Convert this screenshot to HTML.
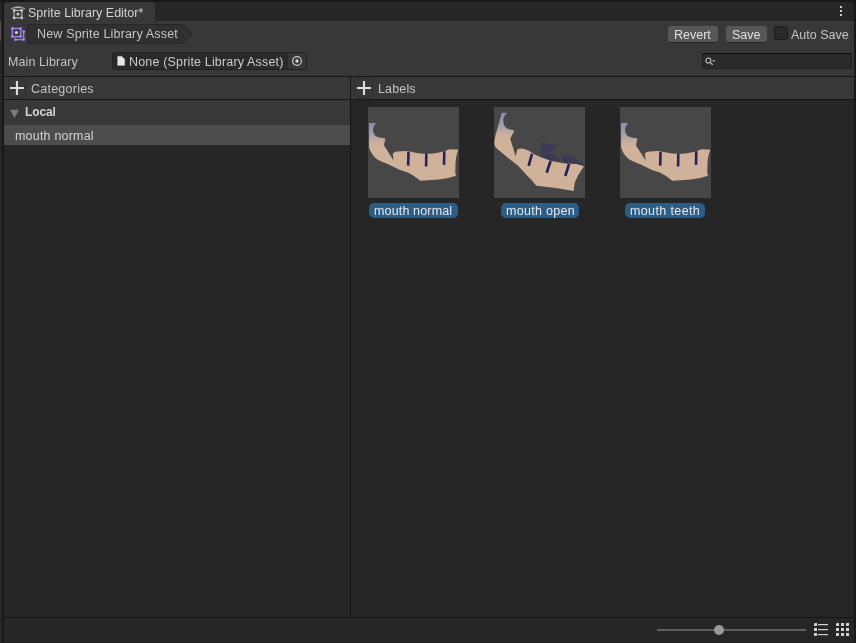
<!DOCTYPE html>
<html><head><meta charset="utf-8">
<style>
*{margin:0;padding:0;box-sizing:border-box}
html,body{width:856px;height:643px;overflow:hidden;background:#191919;font-family:"Liberation Sans",sans-serif;font-size:12.5px;color:#c4c4c4}
.a{position:absolute}
.t{position:absolute;white-space:nowrap;line-height:1;will-change:transform}
</style></head><body>
<!-- left strip -->
<div class="a" style="left:0;top:2px;width:2px;height:641px;background:#262626"></div>
<div class="a" style="left:0;top:21px;width:1px;height:20px;background:#505050"></div>
<!-- window -->
<div class="a" style="left:4px;top:21px;width:850px;height:622px;background:#383838"></div>
<!-- tab bar -->
<div class="a" style="left:4px;top:2px;width:850px;height:19px;background:#262626;border-radius:4px 4px 0 0"></div>
<div class="a" style="left:4px;top:2px;width:151px;height:19px;background:#383838;border-radius:3px 3px 0 0"></div>
<svg class="a" style="left:8px;top:2px" width="20" height="20" viewBox="0 0 20 20">
<path d="M3.1,6.8 Q10,3 16.9,6.8" fill="none" stroke="#c8c8c8" stroke-width="1"/>
<path d="M6.3,6.4 Q10,4.2 13.7,6.4 Q10,5.6 6.3,6.4Z" fill="#c8c8c8"/>
<rect x="6.1" y="8.4" width="7.7" height="7.5" fill="none" stroke="#c8c8c8" stroke-width="1.05"/>
<g fill="#c8c8c8"><circle cx="6.1" cy="8.4" r="1.35"/><circle cx="13.8" cy="8.4" r="1.35"/><circle cx="6.1" cy="15.9" r="1.35"/><circle cx="13.8" cy="15.9" r="1.35"/><circle cx="10" cy="12" r="1.6"/></g>
</svg>
<div class="t" style="left:28px;top:7px;color:#d2d2d2">Sprite Library Editor*</div>
<!-- kebab -->
<div class="a" style="left:840px;top:6px;width:2px;height:2px;background:#cccccc"></div>
<div class="a" style="left:840px;top:10px;width:2px;height:2px;background:#cccccc"></div>
<div class="a" style="left:840px;top:14px;width:2px;height:2px;background:#cccccc"></div>

<!-- breadcrumb -->
<svg class="a" style="left:8px;top:24px" width="20" height="20" viewBox="0 0 20 20">
<g fill="none" stroke="#a27ff0" stroke-width="1.4"><rect x="4.4" y="4.5" width="8.2" height="8.1"/><path d="M15.6,7.5 V15.6 H7.5"/></g>
<g fill="#a27ff0"><circle cx="4.4" cy="4.5" r="1.5"/><circle cx="12.6" cy="4.5" r="1.5"/><circle cx="4.4" cy="12.6" r="1.5"/><circle cx="12.6" cy="12.6" r="1.5"/><circle cx="15.6" cy="7.5" r="1.5"/><circle cx="15.6" cy="15.6" r="1.5"/><circle cx="7.5" cy="15.6" r="1.5"/></g>
<circle cx="8.4" cy="8.4" r="1.5" fill="#d8d8d8"/>
</svg>
<svg class="a" style="left:27px;top:24px" width="168" height="20" viewBox="0 0 168 20"><path d="M0.5 0.5H156L165.2 10L156 19.5H0.5Z" fill="#303030" stroke="#282828" stroke-width="1"/></svg>
<div class="t" style="left:37px;top:28px;color:#c4c4c4;letter-spacing:0.17px">New Sprite Library Asset</div>

<!-- buttons -->
<div class="a" style="left:668px;top:26px;width:50px;height:16.5px;background:#575757;border-radius:3px;border-bottom:1px solid #242424"></div>
<div class="t" style="left:674px;top:29px;color:#e0e0e0">Revert</div>
<div class="a" style="left:726px;top:26px;width:41px;height:16.5px;background:#575757;border-radius:3px;border-bottom:1px solid #242424"></div>
<div class="t" style="left:732px;top:29px;color:#e0e0e0">Save</div>
<div class="a" style="left:774px;top:26px;width:14px;height:14px;background:#2a2a2a;border:1px solid #1e1e1e;border-radius:2px"></div>
<div class="t" style="left:791px;top:29px;color:#c4c4c4">Auto Save</div>

<!-- main library -->
<div class="t" style="left:7.5px;top:56px;letter-spacing:0.1px">Main Library</div>
<div class="a" style="left:112px;top:52px;width:195px;height:18px;background:#2a2a2a;border-radius:3px;border:1px solid #212121"></div>
<svg class="a" style="left:115px;top:54px" width="12" height="14" viewBox="0 0 12 14"><path d="M2,1.8 H6.9 L10.2,5 V12 H2 Z" fill="#e6e6e6" stroke="#1c1c1c" stroke-width="0.8"/></svg>
<div class="a" style="left:288px;top:53px;width:18px;height:16px;background:#373737"></div>
<svg class="a" style="left:288px;top:53px" width="18" height="16" viewBox="0 0 18 16"><circle cx="9" cy="8" r="4.4" fill="none" stroke="#c8c8c8" stroke-width="1.2"/><circle cx="9" cy="8" r="1.7" fill="#d8d8d8"/></svg>
<div class="t" style="left:129px;top:56px;color:#cacaca;letter-spacing:0.165px">None (Sprite Library Asset)</div>
<div class="a" style="left:702px;top:53px;width:150px;height:16px;background:#2a2a2a;border-radius:3px;border:1px solid #212121;border-top-color:#0f0f0f"></div>
<svg class="a" style="left:703px;top:55px" width="16" height="12" viewBox="0 0 16 12"><circle cx="5.4" cy="5.5" r="2.5" fill="none" stroke="#c4c4c4" stroke-width="1.05"/><path d="M7.2,7.4 L9.6,9.8" stroke="#c4c4c4" stroke-width="1.2"/><path d="M9.2,5.2 H12.3 L10.75,6.9 Z" fill="#c4c4c4"/></svg>

<!-- separators -->
<div class="a" style="left:4px;top:76px;width:850px;height:1px;background:#151515"></div>
<div class="a" style="left:4px;top:99px;width:850px;height:1px;background:#151515"></div>
<div class="a" style="left:350px;top:76px;width:1px;height:542px;background:#151515"></div>
<!-- list areas -->
<div class="a" style="left:4px;top:100px;width:346px;height:517px;background:#262626"></div>
<div class="a" style="left:351px;top:100px;width:503px;height:517px;background:#262626"></div>
<div class="a" style="left:4px;top:617px;width:850px;height:1px;background:#151515"></div>
<div class="a" style="left:4px;top:618px;width:850px;height:25px;background:#262626"></div>
<div class="a" style="left:4px;top:642px;width:850px;height:1px;background:#1e1e1e"></div>
<div class="a" style="left:657px;top:629px;width:149px;height:2px;background:#5e5e5e"></div>
<div class="a" style="left:713.5px;top:624.6px;width:10.8px;height:10.8px;border-radius:50%;background:#999999"></div>
<svg class="a" style="left:812px;top:621px" width="40" height="17" viewBox="0 0 40 17"><g fill="#d2d2d2">
<path d="M3,2 H5 V5 H2 V3 Z"/><rect x="2" y="7" width="3" height="3"/><rect x="2" y="12" width="3" height="3"/>
<rect x="6" y="3" width="10" height="1.2"/><rect x="6" y="8" width="10" height="1.2"/><rect x="6" y="13" width="10" height="1.2"/>
<path d="M25,2 H27 V5 H24 V3 Z"/><rect x="29" y="2" width="3" height="3"/><rect x="34" y="2" width="3" height="3"/>
<rect x="24" y="7" width="3" height="3"/><rect x="29" y="7" width="3" height="3"/><rect x="34" y="7" width="3" height="3"/>
<rect x="24" y="12" width="3" height="3"/><rect x="29" y="12" width="3" height="3"/><rect x="34" y="12" width="3" height="3"/>
</g></svg>

<!-- headers -->
<div class="a" style="left:8px;top:78px;width:18px;height:20px;border:1px solid #2e2e2e;border-radius:3px;background:#383838"></div>
<svg class="a" style="left:8px;top:78px" width="18" height="19" viewBox="0 0 18 19"><path d="M2,10 H16 M9,3 V17" stroke="#dcdcdc" stroke-width="2.1"/></svg>
<div class="a" style="left:354px;top:78px;width:19px;height:20px;border:1px solid #2e2e2e;border-radius:3px;background:#383838"></div>
<svg class="a" style="left:355px;top:78px" width="18" height="19" viewBox="0 0 18 19"><path d="M2,10 H16 M9,3 V17" stroke="#dcdcdc" stroke-width="2.1"/></svg>
<div class="t" style="left:30.5px;top:83px;letter-spacing:0.24px">Categories</div>
<div class="t" style="left:378px;top:83px;letter-spacing:0.15px">Labels</div>

<div class="a" style="left:4px;top:100px;width:346px;height:25px;background:#383838"></div>
<svg class="a" style="left:9px;top:109px" width="11" height="10" viewBox="0 0 11 10"><path d="M1,0.8 H10 L5.5,8.9 Z" fill="#7a7a7a"/></svg>
<div class="t" style="left:25px;top:106px;font-weight:bold;font-size:12px;color:#d2d2d2;letter-spacing:-0.1px">Local</div>
<div class="a" style="left:4px;top:125px;width:346px;height:20px;background:#4d4d4d"></div>
<div class="t" style="left:14.5px;top:130px;color:#d2d2d2;letter-spacing:0.2px">mouth normal</div>

<!-- thumbs -->
<svg width="0" height="0" style="position:absolute"><defs>
<linearGradient id="jg1" x1="0" y1="16" x2="0" y2="40" gradientUnits="userSpaceOnUse"><stop offset="0" stop-color="#8c8cac"/><stop offset="0.35" stop-color="#9c98ae"/><stop offset="0.85" stop-color="#ceb09a"/><stop offset="1" stop-color="#d0b29b"/></linearGradient>
<linearGradient id="jg2" x1="0" y1="6" x2="0" y2="30" gradientUnits="userSpaceOnUse"><stop offset="0" stop-color="#8c8cac"/><stop offset="0.45" stop-color="#9c98ae"/><stop offset="0.92" stop-color="#ceb09a"/><stop offset="1" stop-color="#d0b29b"/></linearGradient>
</defs></svg>
<svg class="a" style="left:368px;top:107px" width="91" height="91" viewBox="0 0 91 91"><rect width="91" height="91" fill="#474747"/>
<path d="M1,16 L8.1,16 Q4.2,21 5.2,24.5 Q6.5,29.5 10.5,30.2 L17.5,31.4 L15.9,38.2 L25.6,53.4 L24.8,46.4 Q27,44.5 29.1,44.5 L38,44.1 Q43,44.8 47.5,45.8 Q52,46.6 57.6,46.8 Q63,46.8 67,46.2 Q72,45.3 77.1,43.9 Q80,42.5 82.5,42.3 L90.3,42.7 Q88,48 87.6,54.8 L87.2,65.6 L88,68.7 Q80,71.5 70.9,72.6 L52.2,73.8 Q45,68 39.8,65.6 Q36,64 32,62.9 L21.3,57.7 Q12,54 8.9,52.2 Q3.4,48 1.1,40.6 Z" fill="url(#jg1)"/>
<g stroke="#25235b" stroke-width="2.6"><path d="M40.5,44.7 L40.2,58.6"/><path d="M58.3,46.6 L58.1,59.4"/><path d="M76.3,44.2 L76,57.9"/></g></svg>
<svg class="a" style="left:494px;top:107px" width="91" height="91" viewBox="0 0 91 91"><rect width="91" height="91" fill="#474747"/>
<path d="M47.1,35.4 L62.9,38.2 L57.3,45.2 L64.8,52.7 L57.3,54.1 L47.1,50.3 Z" fill="#3c3b55"/>
<path d="M67.1,52.2 L69,48.5 Q71.5,47.8 74.1,48 Q77,48.8 79.7,50.3 L84.4,54.1 L89,56.9 L90,59.2 L82.5,56.9 L71.3,56.4 Z" fill="#3c3b55"/>
<path d="M7.8,5.7 L12.9,6.1 Q9.5,9.5 9.2,12.2 Q9.3,16 10.1,18.3 Q11.5,21 14.3,22 L20.4,23.4 L16.2,31.8 L21.8,49.5 L23.2,42.5 Q25,41.5 27.9,41.6 Q31.5,42.3 35.3,43.9 L39.6,47.1 L46.1,49.9 L57.3,54.1 Q64,55.6 71.3,56.4 L82.5,56.9 L90,59.2 Q87,63.5 84.4,68 Q82,72 80.6,76.4 L79.7,83.9 Q71,82.5 62,81.1 L42.4,78.8 Q39.5,75.5 37.5,72.7 Q35,70.5 34,69.4 L24.1,58.8 Q15,52 9.2,46.7 Q3,42 1.7,40.2 Q0,37.5 0.33,35.5 Q0.8,32 1.3,29 Q3,23 4.5,17.8 Z" fill="url(#jg2)"/>
<g stroke="#25235b" stroke-width="2.7"><path d="M38,46.9 L34.6,58.8"/><path d="M56.6,54 L52.7,65.7"/><path d="M75.1,56.8 L71.3,69"/></g></svg>
<svg class="a" style="left:620px;top:107px" width="91" height="91" viewBox="0 0 91 91"><rect width="91" height="91" fill="#474747"/>
<path d="M1,16 L8.1,16 Q4.2,21 5.2,24.5 Q6.5,29.5 10.5,30.2 L17.5,31.4 L15.9,38.2 L25.6,53.4 L24.8,46.4 Q27,44.5 29.1,44.5 L38,44.1 Q43,44.8 47.5,45.8 Q52,46.6 57.6,46.8 Q63,46.8 67,46.2 Q72,45.3 77.1,43.9 Q80,42.5 82.5,42.3 L90.3,42.7 Q88,48 87.6,54.8 L87.2,65.6 L88,68.7 Q80,71.5 70.9,72.6 L52.2,73.8 Q45,68 39.8,65.6 Q36,64 32,62.9 L21.3,57.7 Q12,54 8.9,52.2 Q3.4,48 1.1,40.6 Z" fill="url(#jg1)"/>
<g stroke="#25235b" stroke-width="2.6"><path d="M40.5,44.7 L40.2,58.6"/><path d="M58.3,46.6 L58.1,59.4"/><path d="M76.3,44.2 L76,57.9"/></g></svg>
<div class="a" style="left:369px;top:203px;width:89px;height:15px;background:#2c5d87;border-radius:5px"></div>
<div class="t" style="left:374px;top:204.5px;color:#e8e8e8;letter-spacing:0.15px">mouth normal</div>
<div class="a" style="left:501px;top:203px;width:78px;height:15px;background:#2c5d87;border-radius:5px"></div>
<div class="t" style="left:506px;top:204.5px;color:#e8e8e8;letter-spacing:0.29px">mouth open</div>
<div class="a" style="left:625px;top:203px;width:80px;height:15px;background:#2c5d87;border-radius:5px"></div>
<div class="t" style="left:630px;top:204.5px;color:#e8e8e8;letter-spacing:0.38px">mouth teeth</div>

</body></html>
